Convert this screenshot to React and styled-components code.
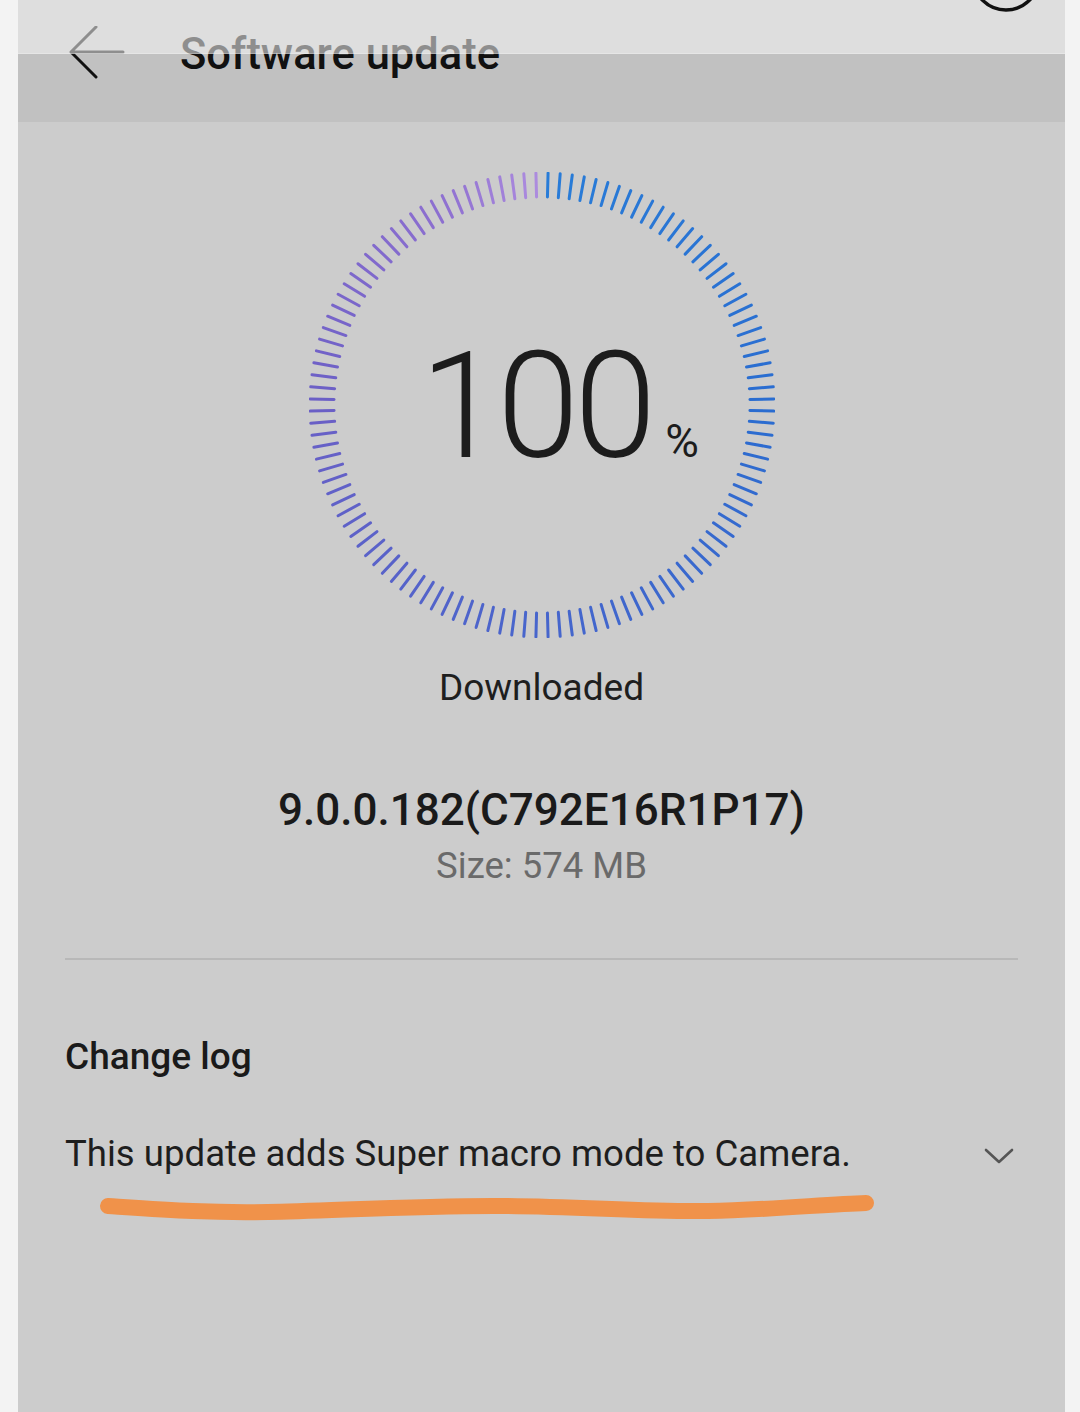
import React from "react";
import styled, { createGlobalStyle } from "styled-components";

const GlobalStyle = createGlobalStyle`
  html, body {
    margin: 0;
    padding: 0;
    background: #f3f3f3;
  }
  body {
    font-family: Roboto, "Noto Sans", "Liberation Sans", sans-serif;
    color: #1e1e1e;
  }
`;

const TICKS = 120;
const STOPS = [
  [0, [40, 124, 216]],
  [0.25, [42, 108, 208]],
  [0.5, [71, 101, 204]],
  [0.75, [107, 95, 198]],
  [0.92, [141, 111, 208]],
  [1, [176, 142, 224]],
];

function tickColor(t) {
  for (let i = 0; i < STOPS.length - 1; i++) {
    const [a, ca] = STOPS[i];
    const [b, cb] = STOPS[i + 1];
    if (t >= a && t <= b) {
      const k = (t - a) / (b - a);
      const c = ca.map((v, j) => Math.round(v + (cb[j] - v) * k));
      return `rgb(${c[0]},${c[1]},${c[2]})`;
    }
  }
  return "rgb(176,142,224)";
}

function Ring() {
  const cx = 233;
  const cy = 233;
  const outer = 232;
  const inner = 208;
  const ticks = [];
  for (let i = 0; i < TICKS; i++) {
    const t = i / TICKS;
    const a = t * Math.PI * 2 + Math.PI / TICKS;
    const s = Math.sin(a);
    const c = -Math.cos(a);
    ticks.push(
      <line
        key={i}
        x1={cx + s * inner}
        y1={cy + c * inner}
        x2={cx + s * outer}
        y2={cy + c * outer}
        stroke={tickColor(t)}
        strokeWidth="3"
        strokeLinecap="round"
      />
    );
  }
  return (
    <RingSvg width="466" height="466" viewBox="0 0 466 466">
      {ticks}
    </RingSvg>
  );
}

export default function App() {
  return (
    <>
      <GlobalStyle />
      <Phone>
        <Header>
          <BackButton>
            <svg width="56" height="56" viewBox="0 0 56 56">
              <path
                d="M54 26 H3 M27 1 L2 26 L27 51"
                fill="none"
                stroke="#111"
                strokeWidth="3"
                strokeLinecap="round"
                strokeLinejoin="round"
              />
            </svg>
          </BackButton>
          <Title>Software update</Title>
          <StatusShade>
            <svg width="80" height="20" viewBox="0 0 80 20">
              <circle cx="40" cy="-23" r="33" fill="none" stroke="#111" strokeWidth="3.5" />
            </svg>
          </StatusShade>
        </Header>

        <Progress>
          <Ring />
          <Percent>
            <Big>100</Big>
            <Unit>%</Unit>
          </Percent>
        </Progress>

        <Status>Downloaded</Status>

        <Version>9.0.0.182(C792E16R1P17)</Version>
        <Size>Size: 574 MB</Size>

        <Divider />

        <Section>
          <SectionTitle>Change log</SectionTitle>
          <LogRow>
            <LogText>This update adds Super macro mode to Camera.</LogText>
            <Chevron>
              <svg width="30" height="18" viewBox="0 0 30 18">
                <path
                  d="M2 3 L15 15 L28 3"
                  fill="none"
                  stroke="#555"
                  strokeWidth="2.6"
                  strokeLinecap="round"
                  strokeLinejoin="round"
                />
              </svg>
            </Chevron>
            <Scribble width="800" height="40" viewBox="0 0 800 40">
              <path
                d="M16 19 C76 23 116 26 176 25 S336 18 416 19 S556 25 616 24 S736 17 774 16"
                fill="none"
                stroke="#f0924a"
                strokeWidth="16"
                strokeLinecap="round"
              />
            </Scribble>
          </LogRow>
        </Section>
      </Phone>
    </>
  );
}

const Phone = styled.div`
  margin: 0 15px 0 18px;
  min-height: 1412px;
  background: #cccccc;
  display: flex;
  flex-direction: column;
  align-items: center;
`;

const Header = styled.div`
  position: relative;
  align-self: stretch;
  height: 122px;
  background: #c1c1c1;
  display: flex;
  align-items: flex-start;
  padding-top: 24px;
  box-sizing: border-box;
`;

const BackButton = styled.div`
  width: 56px;
  height: 56px;
  margin-left: 51px;
  padding-top: 2px;
`;

const Title = styled.div`
  margin-left: 55px;
  margin-top: 3px;
  font-size: 43.5px;
  font-weight: 500;
  line-height: 56px;
  color: #111;
`;

const StatusShade = styled.div`
  position: absolute;
  top: 0;
  left: 0;
  right: 0;
  height: 53px;
  background: rgba(245, 245, 245, 0.55);
  border-bottom: 1px solid rgba(255, 255, 255, 0.25);
  display: flex;
  justify-content: flex-end;
  padding-right: 19px;

  svg {
    display: block;
  }
`;

const Progress = styled.div`
  position: relative;
  margin-top: 50px;
  width: 466px;
  height: 466px;
  display: flex;
  align-items: center;
  justify-content: center;
`;

const RingSvg = styled.svg`
  position: absolute;
  top: 0;
  left: 0;
`;

const Percent = styled.div`
  display: flex;
  align-items: baseline;
  margin-left: 36px;
  margin-top: 4px;
`;

const Big = styled.span`
  font-size: 148px;
  font-weight: 300;
  letter-spacing: -5px;
  line-height: 1;
  color: #1c1c1c;
`;

const Unit = styled.span`
  font-size: 46px;
  font-weight: 400;
  margin-left: 14px;
  color: #1c1c1c;
`;

const Status = styled.div`
  margin-top: 28px;
  font-size: 37px;
  line-height: 44px;
  color: #1e1e1e;
`;

const Version = styled.div`
  margin-top: 75px;
  font-size: 44px;
  font-weight: 500;
  line-height: 50px;
  color: #1a1a1a;
`;

const Size = styled.div`
  margin-top: 9px;
  font-size: 36.5px;
  line-height: 44px;
  color: #6a6a6a;
`;

const Divider = styled.div`
  align-self: stretch;
  margin: 70px 47px 0;
  height: 2px;
  background: #b8b8b8;
`;

const Section = styled.div`
  align-self: stretch;
  padding: 0 47px;
  display: flex;
  flex-direction: column;
`;

const SectionTitle = styled.div`
  margin-top: 75px;
  font-size: 37px;
  font-weight: 500;
  line-height: 44px;
  color: #1a1a1a;
`;

const LogRow = styled.div`
  position: relative;
  margin-top: 53px;
  display: flex;
  align-items: center;
  justify-content: space-between;
`;

const LogText = styled.div`
  font-size: 36.6px;
  line-height: 44px;
  color: #1e1e1e;
`;

const Chevron = styled.div`
  width: 30px;
  height: 18px;
  margin-right: 4px;
  margin-top: 4px;

  svg {
    display: block;
  }
`;

const Scribble = styled.svg`
  position: absolute;
  left: 27px;
  top: 55px;
  pointer-events: none;
`;
